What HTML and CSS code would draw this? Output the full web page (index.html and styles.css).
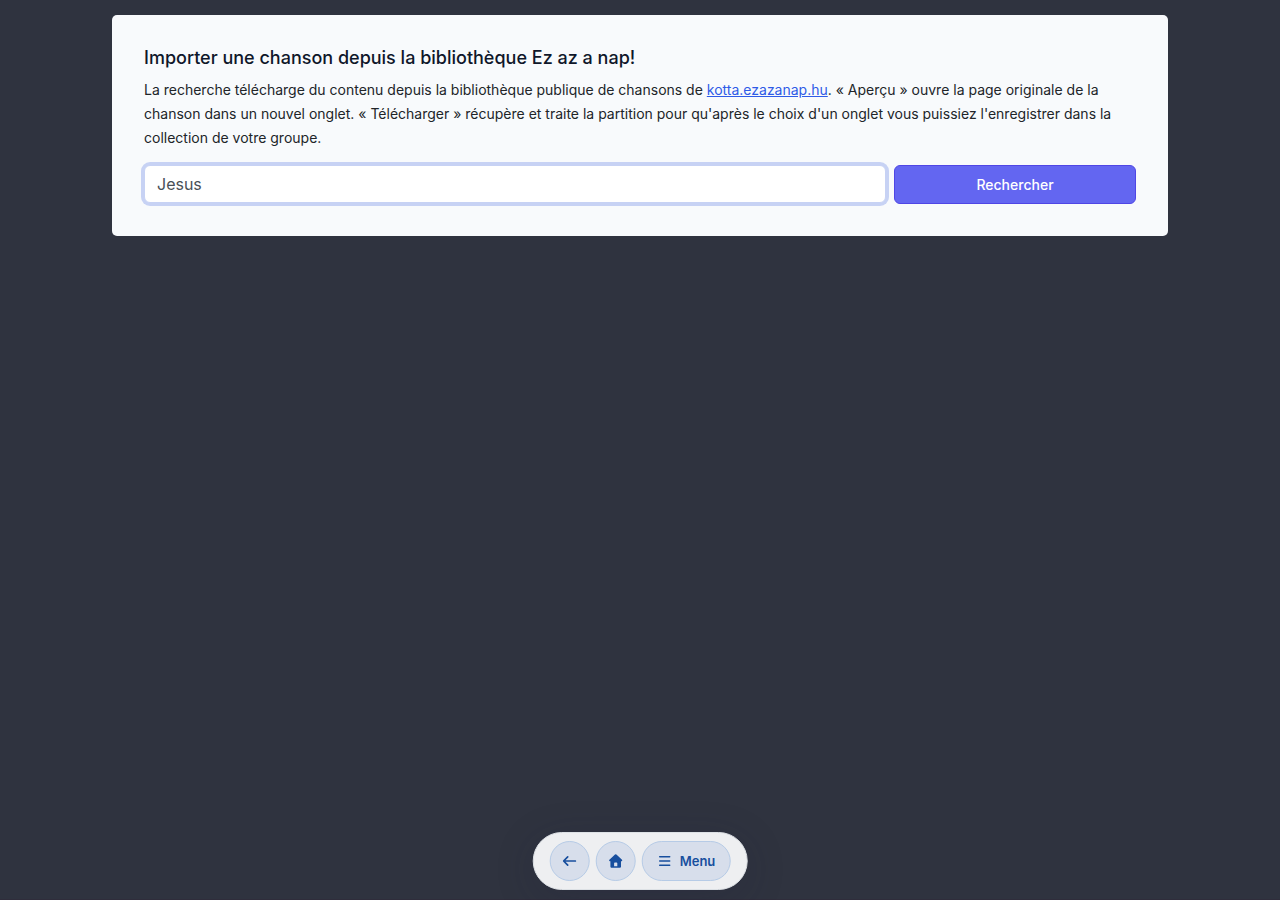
FILE: index.html
```
<!DOCTYPE html>
<html lang="fr">
<head>
<meta charset="utf-8">
<meta name="viewport" content="width=device-width, initial-scale=1">
<title>Importer une chanson</title>
<link rel="stylesheet" href="styles.css">
</head>
<body>
<main class="card">
  <h1 class="card-title">Importer une chanson depuis la bibliothèque Ez az a nap!</h1>
  <p class="card-text">La recherche télécharge du contenu depuis la bibliothèque publique de chansons de <a class="link" href="#">kotta.ezazanap.hu</a>. « Aperçu » ouvre la page originale de la chanson dans un nouvel onglet. « Télécharger » récupère et traite la partition pour qu'après le choix d'un onglet vous puissiez l'enregistrer dans la collection de votre groupe.</p>
  <form class="search">
    <input class="search-input" type="text" value="Jesus" aria-label="Titre de la chanson">
    <button class="search-button" type="button">Rechercher</button>
  </form>
</main>
<nav class="dock" aria-label="Navigation">
  <button class="dock-button" type="button" aria-label="Retour">
    <svg width="14" height="14" viewBox="0 0 14 14" fill="none" stroke="currentColor" stroke-width="1.7" stroke-linecap="round" stroke-linejoin="round" aria-hidden="true"><path d="M12.700 7H1.200M5 2.800.9 7 5 11.200"/></svg>
  </button>
  <button class="dock-button" type="button" aria-label="Accueil">
    <svg width="14" height="14" viewBox="0 0 14 14" fill="currentColor" fill-rule="evenodd" aria-hidden="true"><path d="M6.3.5a1 1 0 0 1 1.400 0l5.600 5.300c.6.6.2 1.400-.5 1.400h-.5v5.200c0 .8-.6 1.400-1.400 1.400H3.100c-.8 0-1.400-.6-1.400-1.400V7.200h-.5c-.7 0-1.100-.8-.5-1.400zM6.100 8.500c-.4 0-.7.3-.7.7v3.100h3.200V9.200c0-.4-.3-.7-.7-.7z"/></svg>
  </button>
  <button class="dock-button dock-menu" type="button">
    <svg width="14" height="14" viewBox="0 0 14 14" fill="none" stroke="currentColor" stroke-width="1.500" stroke-linecap="round" aria-hidden="true"><path d="M2 2.700h10M2 7h10M2 11.300h10"/></svg>
    <span>Menu</span>
  </button>
</nav>
</body>
</html>
```
FILE: styles.css
```
* { box-sizing: border-box; }

body {
  min-height: 100vh;
  margin: 0;
  padding: 15px 16px 80px;
  border-bottom: 1px solid #2f2d3b;
  background: #2f333f;
  color: #212529;
  font-family: Inter, "Liberation Sans", sans-serif;
  font-optical-sizing: none;
  font-size: 14px;
  line-height: 24px;
}

.card {
  max-width: 1056px;
  margin: 0 auto;
  padding: 32px;
  border-radius: 5px;
  background: #f8fafc;
}

.card-title {
  margin: 0 0 9px;
  color: #0f172a;
  font-size: 18px;
  font-weight: 500;
  line-height: 22px;
}

.card-text { margin: 0 0 15px; }

.link { color: #2f5be7; }

.search {
  display: grid;
  grid-template-columns: repeat(4, 1fr);
  align-items: start;
  gap: 8px;
}

.search-input,
.search-button {
  border-radius: 6px;
  font-family: inherit;
}

.search-input {
  grid-column: span 3;
  min-width: 0;
  height: 38px;
  padding: 0 12px;
  border: 1px solid #c7d2f4;
  outline: 0;
  background: #fff;
  color: #495057;
  font-size: 16px;
  box-shadow: 0 0 0 3px #c7d2f4;
}

.search-button {
  height: 39px;
  border: 1px solid #4f46e5;
  background: #6366f1;
  color: #fff;
  font-size: 14px;
  font-weight: 500;
}

.dock {
  position: fixed;
  bottom: 10px;
  left: 50%;
  display: flex;
  gap: 6px;
  padding: 8px 16px;
  border: 1px solid #dde1e5;
  border-radius: 29px;
  background: #eeeff1;
  box-shadow: 0 8px 40px rgba(30, 32, 60, 0.2);
  transform: translateX(-50%);
}

.dock-button {
  display: flex;
  align-items: center;
  justify-content: center;
  width: 40px;
  height: 40px;
  padding: 0;
  border: 1px solid #b6cbe6;
  border-radius: 20px;
  background: #d7deeb;
  color: #184f9e;
  font: 600 13px/20px Inter, "Liberation Sans", sans-serif;
}

.dock-menu {
  gap: 8px;
  width: auto;
  padding: 0 14px 0 15px;
}
```
